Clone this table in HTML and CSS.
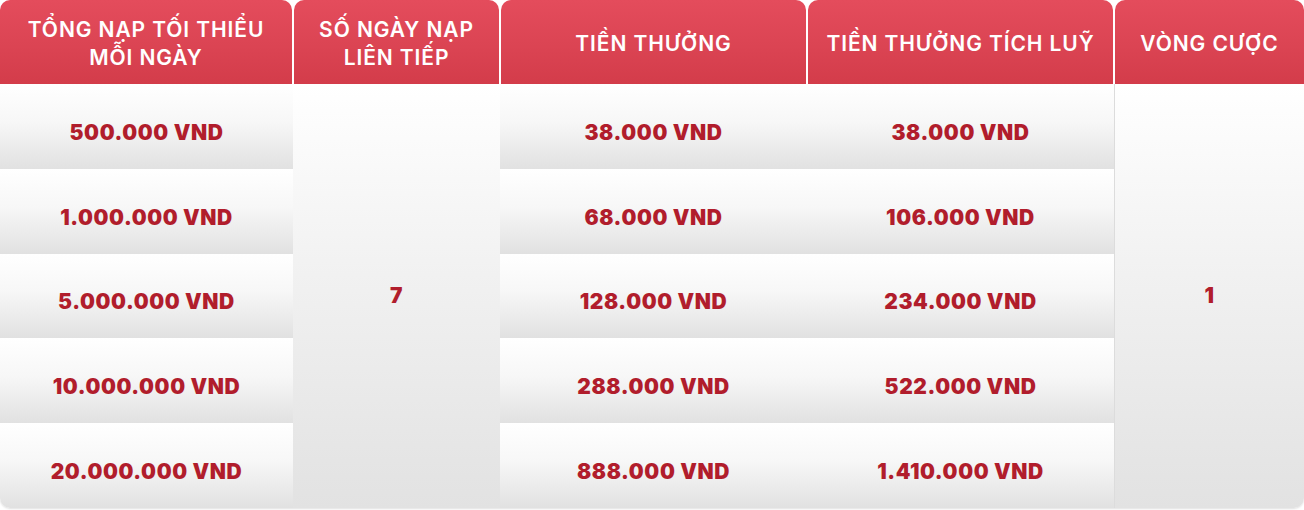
FILE: index.html
```html
<!DOCTYPE html>
<html lang="vi">
<head>
<meta charset="utf-8">
<title>Bảng thưởng nạp</title>
<link rel="stylesheet" href="styles.css">
</head>
<body>
<div class="table">
  <div class="th">TỔNG NẠP TỐI THIỂU<br>MỖI NGÀY</div>
  <div class="th">SỐ NGÀY NẠP<br>LIÊN TIẾP</div>
  <div class="th">TIỀN THƯỞNG</div>
  <div class="th">TIỀN THƯỞNG TÍCH LUỸ</div>
  <div class="th">VÒNG CƯỢC</div>

  <div class="merged days">7</div>
  <div class="merged rounds">1</div>

  <div class="td first">500.000 VND</div>
  <div class="td">38.000 VND</div>
  <div class="td">38.000 VND</div>

  <div class="td first">1.000.000 VND</div>
  <div class="td">68.000 VND</div>
  <div class="td">106.000 VND</div>

  <div class="td first">5.000.000 VND</div>
  <div class="td">128.000 VND</div>
  <div class="td">234.000 VND</div>

  <div class="td first">10.000.000 VND</div>
  <div class="td">288.000 VND</div>
  <div class="td">522.000 VND</div>

  <div class="td first last">20.000.000 VND</div>
  <div class="td">888.000 VND</div>
  <div class="td">1.410.000 VND</div>
</div>
</body>
</html>
```
FILE: styles.css
```css
html, body {
  margin: 0;
  padding: 0;
  background: #ffffff;
}

body {
  width: 1304px;
  height: 510px;
  overflow: hidden;
  font-family: Inter, "Noto Sans", "Liberation Sans", sans-serif;
}

.table {
  display: grid;
  grid-template-columns: 293px 207px 307px 307px 190px;
  grid-template-rows: 84px repeat(5, 84.8px);
  border-radius: 0 0 10px 10px;
  box-shadow: 0 1px 2px rgba(0, 0, 0, 0.12);
  overflow: hidden;
}

.th {
  margin: 0 1px;
  padding-top: 3px;
  box-sizing: border-box;
  border-radius: 10px 10px 0 0;
  background: linear-gradient(180deg, #e44c5c 0%, #db4453 55%, #d33c4a 100%);
  color: #ffffff;
  font-size: 21px;
  font-weight: 600;
  line-height: 28px;
  text-align: center;
  display: flex;
  align-items: center;
  justify-content: center;
  letter-spacing: 0.9px;
}

.th:first-child {
  margin-left: 0;
}

.th:nth-child(5) {
  margin-right: 0;
}

.td,
.merged {
  display: flex;
  align-items: center;
  justify-content: center;
  color: #b11d2c;
  font-size: 21px;
  font-weight: 900;
  letter-spacing: 0.6px;
}

.td {
  padding-top: 12px;
  box-sizing: border-box;
  background: linear-gradient(180deg, #ffffff 0%, #f7f7f7 45%, #e1e1e1 100%);
}

.merged {
  grid-row: 2 / span 5;
  background: linear-gradient(180deg, #ffffff 0%, #f1f1f1 45%, #e2e2e2 100%);
}

.days {
  grid-column: 2;
}

.rounds {
  grid-column: 5;
  border-left: 1px solid #dcdcdc;
}
```
